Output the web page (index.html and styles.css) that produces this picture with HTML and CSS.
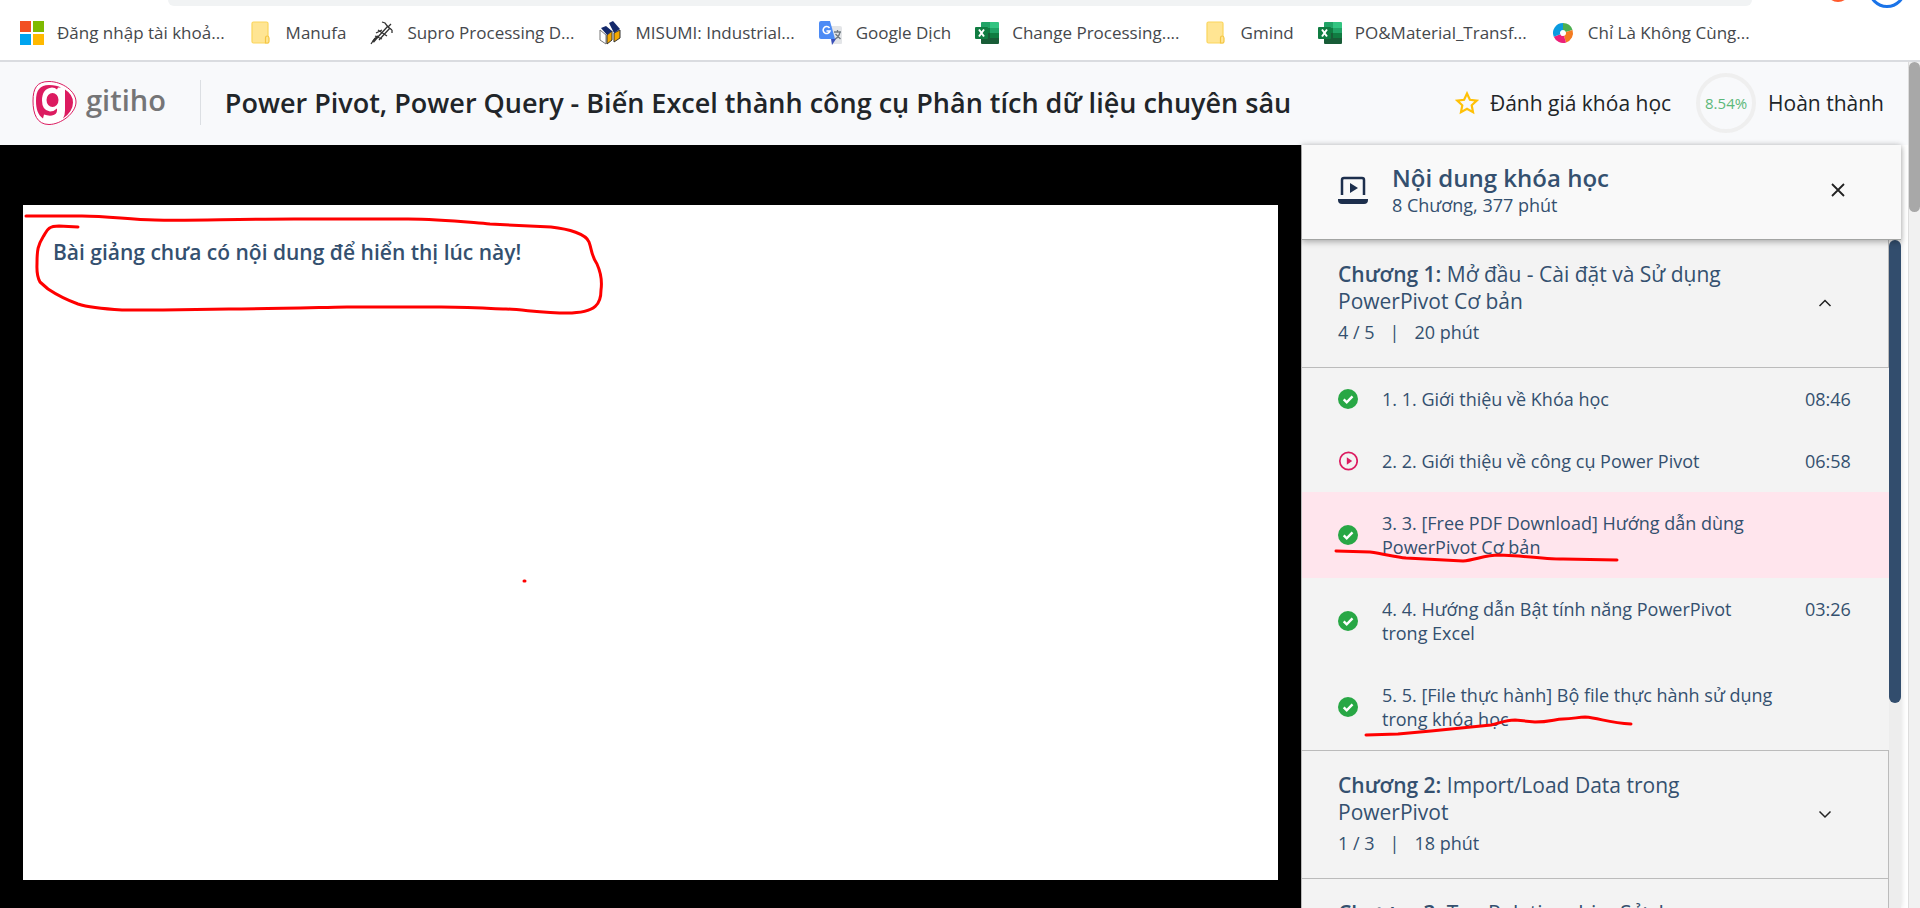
FILE: index.html
```html
<!DOCTYPE html>
<html lang="vi">
<head>
<meta charset="utf-8">
<title>Gitiho - Power Pivot, Power Query</title>
<link rel="stylesheet" href="styles.css">
</head>
<body>
<svg class="defs" aria-hidden="true">
  <symbol id="folder" viewBox="0 0 20 24"><path d="M1 2.500Q1 1 2.500 1H15.500Q17 1 17 2.500V22H2.500Q1 22 1 20.500Z" fill="#ffe593" stroke="#fbd55c" stroke-width="1.200"/><path d="M14.500 22V17Q14.500 15 16.200 15T18 17V20.500Q18 22 16.500 22Z" fill="#ffe593" stroke="#f4c542" stroke-width="1.200"/></symbol>
  <symbol id="excel" viewBox="0 0 24 22"><path fill="#21a366" d="M6 1q0-1 1-1h8v6H6z"/><path fill="#33c481" d="M15 0h8q1 0 1 1v5h-9z"/><path fill="#107c41" d="M6 6h9v5H6zM15 11h9v5h-9z"/><path fill="#21a366" d="M15 6h9v5h-9z"/><path fill="#185c37" d="M6 11h9v5h9v5q0 1-1 1H7q-1 0-1-1z"/><rect y="5" width="13" height="12" rx="1" fill="#107c41"/><path d="M4 7.500 9 14.500M9 7.500 4 14.500" stroke="#fff" stroke-width="2"/></symbol>
  <symbol id="done" viewBox="0 0 20 20"><circle cx="10" cy="10" r="10" fill="#28a745"/><path d="m5.700 10.300 3 3 5.800-6" fill="none" stroke="#fff" stroke-width="2.400"/></symbol>
  <symbol id="play" viewBox="0 0 20 20"><circle cx="10.500" cy="10" r="8.700" fill="none" stroke="#dc1b60" stroke-width="1.700"/><path d="m8.800 6.300 5.400 3.700-5.400 3.700z" fill="#dc1b60"/></symbol>
  <symbol id="up" viewBox="0 0 14 14"><path d="m1.500 10 5.500-5.500 5.500 5.500" fill="none" stroke="#222" stroke-width="1.500"/></symbol>
  <symbol id="down" viewBox="0 0 14 14"><path d="m1.500 4.500 5.500 5.500 5.500-5.500" fill="none" stroke="#222" stroke-width="1.500"/></symbol>
</svg>

<div class="browser">
  <div class="omnibox"></div>
  <span class="extension"></span>
  <span class="profile"></span>
  <nav class="bookmarks">
    <a href="#"><svg viewBox="0 0 24 24"><path fill="#f25022" d="M0 0h11v11H0z"/><path fill="#7fba00" d="M13 0h11v11H13z"/><path fill="#00a4ef" d="M0 13h11v11H0z"/><path fill="#ffb900" d="M13 13h11v11H13z"/></svg>Đăng nhập tài khoả...</a>
    <a href="#"><svg viewBox="0 0 20 24"><use href="#folder"/></svg>Manufa</a>
    <a href="#"><svg viewBox="0 0 24 24"><g fill="none" stroke="#333" stroke-width="1.300"><path d="M1 23 5 17M12 1l3 1 3 4 4 3M18 6l3-3M22 9v3M6 12l6-3M8 9l9 6M5 15l7 3"/><path d="M3 21 8 15" stroke-width="2.500"/><path d="M7 17 18 5M9 19 20 7"/></g></svg>Supro Processing D...</a>
    <a href="#"><svg viewBox="0 0 24 24"><path d="m1 9 6 5v9l-6-4z" fill="#fff" stroke="#777"/><path d="m8 14 5-4v9l-5 4z" fill="#f5a800" stroke="#333"/><path d="m15 12 6-3v8l-6 4z" fill="#f5a800" stroke="#333"/><path d="m2 7 5-2 6 5-5 4zM10 2l4-2 7 8-6 4z" fill="#14296b"/></svg>MISUMI: Industrial...</a>
    <a href="#"><svg viewBox="0 0 24 24"><path d="M10 5h11q2 0 2 2v15q0 1-1 1h-8z" fill="#e3e5e8"/><path d="M12 18h5l-4 6z" fill="#3a50b8"/><path d="M2 0h9l5 18H2q-2 0-2-2V2q0-2 2-2z" fill="#4c8bf5"/><path d="M10.500 7A3.500 3.500 0 1 0 11 10H7.500" fill="none" stroke="#fff" stroke-width="1.600"/><path d="M15 11h7M18.500 9v2M21 11q-1 5-5 7M16.500 13l5 5" fill="none" stroke="#707980" stroke-width="1.300"/></svg>Google Dịch</a>
    <a href="#"><svg viewBox="0 0 24 22"><use href="#excel"/></svg>Change Processing....</a>
    <a href="#"><svg viewBox="0 0 20 24"><use href="#folder"/></svg>Gmind</a>
    <a href="#"><svg viewBox="0 0 24 22"><use href="#excel"/></svg>PO&amp;Material_Transf...</a>
    <a href="#"><svg viewBox="0 0 24 24"><g fill="none" stroke-width="7"><path d="M12 5.500A6.500 6.500 0 0 1 18.200 10" stroke="#4caf50"/><path d="M18.200 10A6.500 6.500 0 0 1 14 18.200" stroke="#f47b20"/><path d="M14 18.200A6.500 6.500 0 0 1 6 14.500" stroke="#ec2079"/><path d="M6 14.500A6.500 6.500 0 0 1 12 5.500" stroke="#0a9be0"/></g></svg>Chỉ Là Không Cùng...</a>
  </nav>
</div>

<div class="viewport">
  <div class="page">
    <header class="top">
      <a class="logo" href="#"><svg viewBox="0 0 46 46"><path d="M17 1.500C5 1.500 1 8 1 21S5 44.500 17 44.500 44 33 44 22 30 1.500 17 1.500Z" fill="#fff" stroke="#dc1b60" stroke-width="1"/><path d="M17 5C8 5 4 10 4 21c0 8 2 14 7 17.500l1-4q4 1.500 8 1 5-1 5-5v-2q-3 3-7 3-8-1-8-11 0-12 10-13 3 0 5 2l1-2h3q-4-2.500-12-2.500Z" fill="#dc1b60"/><ellipse cx="20.500" cy="20" rx="6" ry="7" fill="#dc1b60"/><path d="M33 9.500q8 5 8 13 0 9-10 16 2-3 2-8Z" fill="#dc1b60"/></svg><span>gitiho</span></a>
      <h1>Power Pivot, Power Query - Biến Excel thành công cụ Phân tích dữ liệu chuyên sâu</h1>
      <a class="rate" href="#"><svg viewBox="0 0 24 24"><path d="m12 2.500 2.900 6.300 6.800.8-5 4.700 1.300 6.800-6-3.400-6 3.400 1.300-6.800-5-4.700 6.800-.8z" fill="none" stroke="#ffc107" stroke-width="2.200"/></svg>Đánh giá khóa học</a>
      <div class="progress"><span class="ring">8.54%</span>Hoàn thành</div>
    </header>

    <div class="course">
      <main class="stage">
        <div class="lecture"><p>Bài giảng chưa có nội dung để hiển thị lúc này!</p></div>
        <svg class="ink ink-stage" viewBox="0 145 640 460"><path d="M26 216H82C110 216 130 220 155 220C190 221 230 219 294 219H408C440 219 465 222 490 224L551 227C569 229 586 234 589 242C592 250 591 255 597 264C601 273 602 283 601 290C601 303 597 313 567 313C545 313 525 310 506 309C480 308 460 307 441 307H347C300 308 265 309 229 309L163 310H122C105 309 90 308 78 304C67 300 60 297 48 289L40 282C36 275 37 268 37 263C37 250 38 245 43 237C47 231 47 226 59 226L78 227"/><path d="M524 581h1"/></svg>
      </main>

      <aside class="sidebar">
        <div class="side-head">
          <svg class="laptop" viewBox="0 0 30 30"><path d="M4 20V5q0-2 2-2h18q2 0 2 2v15" fill="none" stroke="#1d2f4d" stroke-width="2.500"/><path d="M0 24h30v1q0 4-4 4H4q-4 0-4-4zM12 8l8 5-8 5z" fill="#1d2f4d"/></svg>
          <div class="side-title"><h2>Nội dung khóa học</h2><p>8 Chương, 377 phút</p></div>
          <button class="close" type="button" aria-label="Đóng"><svg viewBox="0 0 14 14"><path d="m1 1 12 12M13 1 1 13" stroke="#222" stroke-width="1.800"/></svg></button>
        </div>
        <div class="side-body">
          <div class="chapters">
            <button class="chapter" type="button"><span class="chapter-text"><span class="chapter-name"><b>Chương 1:</b> Mở đầu - Cài đặt và Sử dụng PowerPivot Cơ bản</span><span class="meta"><span>4 / 5</span><span>|</span><span>20 phút</span></span></span><svg viewBox="0 0 14 14"><use href="#up"/></svg></button>
            <ul class="lessons">
              <li><a href="#"><svg viewBox="0 0 20 20"><use href="#done"/></svg><span>1. 1. Giới thiệu về Khóa học</span><time>08:46</time></a></li>
              <li><a href="#"><svg viewBox="0 0 20 20"><use href="#play"/></svg><span>2. 2. Giới thiệu về công cụ Power Pivot</span><time>06:58</time></a></li>
              <li class="active"><a href="#"><svg viewBox="0 0 20 20"><use href="#done"/></svg><span>3. 3. [Free PDF Download] Hướng dẫn dùng PowerPivot Cơ bản</span><time></time></a><svg class="ink ink-row" viewBox="1302 493 340 86"><path d="M1336 552L1370 553C1385 555 1395 558 1406 559L1463 562C1475 561 1485 556 1499 556L1519 557C1540 559 1550 560 1563 560L1617 561"/></svg></li>
              <li><a href="#"><svg viewBox="0 0 20 20"><use href="#done"/></svg><span>4. 4. Hướng dẫn Bật tính năng PowerPivot trong Excel</span><time>03:26</time></a></li>
              <li><a href="#"><svg viewBox="0 0 20 20"><use href="#done"/></svg><span>5. 5. [File thực hành] Bộ file thực hành sử dụng trong khóa học</span><time></time></a><svg class="ink ink-row" viewBox="1302 664 340 86"><path d="M1366 735L1398 734L1431 731L1491 725C1500 723 1505 720 1515 720L1535 722C1550 722 1555 719 1563 719C1573 719 1578 717 1585 717C1600 718 1608 723 1631 724"/></svg></li>
            </ul>
            <button class="chapter" type="button"><span class="chapter-text"><span class="chapter-name"><b>Chương 2:</b> Import/Load Data trong PowerPivot</span><span class="meta"><span>1 / 3</span><span>|</span><span>18 phút</span></span></span><svg viewBox="0 0 14 14"><use href="#down"/></svg></button>
            <button class="chapter" type="button"><span class="chapter-text"><span class="chapter-name"><b>Chương 3:</b> Tạo Relationship, Sử dụng</span></span><svg viewBox="0 0 14 14"><use href="#down"/></svg></button>
          </div>
          <div class="side-track"><div class="side-thumb"></div></div>
        </div>
      </aside>
    </div>
  </div>
  <div class="page-track"><div class="page-thumb"></div></div>
</div>
</body>
</html>
```
FILE: styles.css
```css
* { box-sizing: border-box; }
body {
  margin: 0;
  height: 100vh;
  display: flex;
  flex-direction: column;
  overflow: hidden;
  font: 18px/24px "Open Sans", "Noto Sans", sans-serif;
  color: #34506f;
  background: #fff;
}
h1, h2, p, ul { margin: 0; padding: 0; }
a { color: inherit; text-decoration: none; }
button { font: inherit; color: inherit; background: none; border: 0; padding: 0; text-align: left; }
svg { flex: none; display: block; }
.defs { position: absolute; width: 0; height: 0; }

/* Browser chrome */
.browser { position: relative; border-bottom: 2px solid #dadce0; overflow: hidden; }
.omnibox { height: 6px; margin: 0 168px; background: #f1f3f4; border-radius: 0 0 20px 20px; }
.extension { position: absolute; right: 70px; top: -22px; width: 24px; height: 24px; border-radius: 50%; background: #ff5a2c; }
.profile { position: absolute; right: 14px; top: -30px; width: 38px; height: 38px; border-radius: 50%; border: 3px solid #1a73e8; }
.bookmarks { display: flex; gap: 24px; padding: 13px 20px; font-size: 17px; line-height: 28px; color: #45484c; white-space: nowrap; }
.bookmarks a { display: flex; align-items: center; gap: 13px; }
.bookmarks svg { width: 24px; height: 24px; }

.viewport { flex: 1; min-height: 0; display: flex; }
.page { flex: 1; min-width: 0; display: flex; flex-direction: column; }
.page-track { width: 12px; background: #f1f1f1; border-left: 1px solid #ddd; }
.page-thumb { height: 150px; background: #a8a8a8; border-radius: 6px; }

/* Course header */
.top { height: 83px; flex: none; display: flex; align-items: center; padding: 0 24px 2px 32px; background: #f8f9fb; color: #212529; font-size: 21px; white-space: nowrap; }
.logo { display: flex; align-items: center; gap: 8px; height: 45px; padding-right: 34px; margin-right: 24px; border-right: 1px solid #dcdfe3; color: #757577; font: 600 29px/36px "Open Sans", sans-serif; }
.logo svg { width: 46px; height: 46px; }
.logo span { padding-bottom: 6px; }
.top h1 { flex: 1; font-size: 27px; font-weight: 600; line-height: 36px; }
.rate { display: flex; align-items: center; gap: 11px; margin-right: 25px; }
.rate svg { width: 24px; height: 24px; }
.progress { display: flex; align-items: center; gap: 12px; }
.ring { width: 60px; height: 60px; border: 4px solid #efefef; border-radius: 50%; font-size: 15px; line-height: 52px; text-align: center; color: #5cb87a; }

.course { flex: 1; min-height: 0; display: flex; padding-right: 7px; }
.stage { position: relative; flex: 1; min-width: 0; display: flex; padding: 60px 23px 28px; background: #000; }
.lecture { flex: 1; padding: 33px 30px; background: #fff; font-size: 21px; font-weight: 600; line-height: 28px; }

/* Hand-drawn marks over the page */
.ink { position: absolute; left: 0; top: 0; fill: none; stroke: #f00; stroke-width: 3; stroke-linecap: round; stroke-linejoin: round; pointer-events: none; }
.ink-stage { width: 640px; height: 460px; }
.ink-row { width: 340px; height: 86px; }

/* Course contents */
.sidebar { width: 600px; flex: none; display: flex; flex-direction: column; border-left: 1px solid #bbb; background: #f3f3f3; box-shadow: 0 0 6px rgba(0, 0, 0, .15); }
.side-head { position: relative; display: flex; align-items: center; padding: 18px 56px 22px 36px; background: #f9f9f9; border-bottom: 1px solid #a3a5a3; box-shadow: 0 2px 6px rgba(0, 0, 0, .3); }
.laptop { width: 30px; height: 30px; margin-right: 24px; }
.side-title { flex: 1; }
.side-title h2 { font-size: 24px; font-weight: 600; line-height: 30px; }
.close svg { width: 14px; height: 14px; }
.side-body { flex: 1; min-height: 0; display: flex; overflow: hidden; }
.chapters { flex: 1; min-width: 0; }
.side-track { width: 12px; background: #ededed; }
.side-thumb { height: 463px; border-radius: 6px; background: #324d6d; }
.chapter { width: 100%; display: flex; align-items: center; gap: 28px; padding: 21px 56px 23px 36px; border-top: 1px solid #bbb; border-right: 1px solid #bbb; font-size: 21px; line-height: 27px; }
.chapter:first-child { border-top: 0; border-bottom: 1px solid #bbb; }
.chapter b { font-weight: 600; }
.chapter-text { flex: 1; display: flex; flex-direction: column; gap: 5px; }
.chapter svg { width: 14px; height: 14px; }
.meta { display: flex; gap: 15px; font-size: 18px; line-height: 24px; }
.lessons { list-style: none; }
.lessons li { position: relative; }
.lessons a { display: flex; align-items: center; padding: 19px 36px; }
.lessons a svg { width: 20px; height: 20px; margin-right: 24px; }
.lessons span { flex: 1; }
.lessons time { width: 48px; margin-left: 30px; align-self: flex-start; }
.lessons .active { background: #ffe5ed; }
```
